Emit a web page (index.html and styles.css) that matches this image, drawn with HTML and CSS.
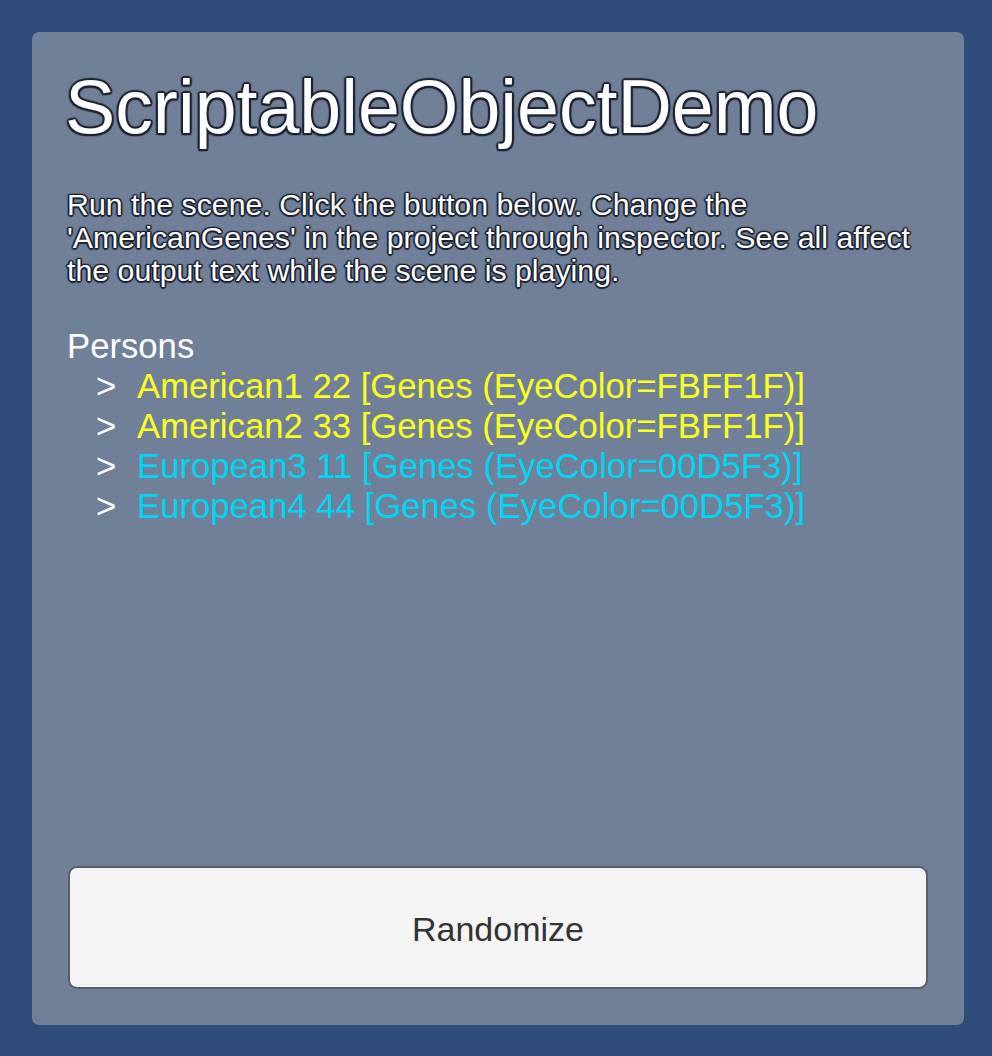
FILE: index.html
```html
<!DOCTYPE html>
<html lang="en">
<head>
<meta charset="utf-8">
<title>ScriptableObjectDemo</title>
<link rel="stylesheet" href="styles.css">
</head>
<body>
<main class="panel">
  <h1 class="title">ScriptableObjectDemo</h1>
  <p class="desc">Run the scene. Click the button below. Change the 'AmericanGenes' in the project through inspector. See all affect the output text while the scene is playing.</p>
  <section class="persons">
    <div class="persons-label">Persons</div>
    <ul class="person-list">
      <li class="person american"><span class="marker">&gt;</span><span>American1 22 [Genes (EyeColor=FBFF1F)]</span></li>
      <li class="person american"><span class="marker">&gt;</span><span>American2 33 [Genes (EyeColor=FBFF1F)]</span></li>
      <li class="person european"><span class="marker">&gt;</span><span>European3 11 [Genes (EyeColor=00D5F3)]</span></li>
      <li class="person european"><span class="marker">&gt;</span><span>European4 44 [Genes (EyeColor=00D5F3)]</span></li>
    </ul>
  </section>
  <button class="btn" type="button">Randomize</button>
</main>
</body>
</html>
```

FILE: styles.css
```css
html, body {
  margin: 0;
  padding: 0;
}
body {
  background: #2f4b7a;
  padding: 32px 28px 31px 32px;
  font-family: "Liberation Sans", Arial, sans-serif;
  box-sizing: border-box;
  height: 1056px;
}
.panel {
  box-sizing: border-box;
  height: 993px;
  background: #708099;
  border-radius: 7px;
  padding: 38px 36px 36px 35px;
  display: flex;
  flex-direction: column;
}
.title {
  margin: 0 0 0 -2px;
  font-weight: normal;
  font-size: 75.3px;
  line-height: 74px;
  color: #ffffff;
  text-shadow:
    2px 0 1px #1e2330,
    -2px 0 1px #1e2330,
    0 2px 1px #1e2330,
    0 -2px 1px #1e2330,
    1.5px 1.5px 1px #1e2330,
    -1.5px -1.5px 1px #1e2330,
    1.5px -1.5px 1px #1e2330,
    -1.5px 1.5px 1px #1e2330,
    0 0 3px #1e2330;
}
.desc {
  margin: 44px 0 0 0;
  font-size: 30.3px;
  line-height: 33px;
  color: #ffffff;
  text-shadow:
    1.5px 0 1px #1e2330,
    -1.5px 0 1px #1e2330,
    0 1.5px 1px #1e2330,
    0 -1.5px 1px #1e2330,
    1px 1px 1px #1e2330,
    -1px -1px 1px #1e2330,
    1px -1px 1px #1e2330,
    -1px 1px 1px #1e2330,
    0 0 2px #1e2330;
}
.persons {
  margin-top: 39px;
  font-size: 34.7px;
  line-height: 40px;
}
.persons-label {
  color: #ffffff;
}
.person-list {
  list-style: none;
  margin: 0;
  padding: 0 0 0 29px;
}
.person {
  display: flex;
}
.marker {
  color: #ffffff;
  width: 41px;
  flex: none;
}
.american {
  color: #fbff1f;
}
.european {
  color: #00d5f3;
}
.btn {
  margin-top: auto;
  margin-left: 1px;
  box-sizing: border-box;
  height: 123px;
  width: 860px;
  background: #f4f4f4;
  border: 2px solid #5a5f66;
  border-radius: 9px;
  font-family: "Liberation Sans", Arial, sans-serif;
  font-size: 34px;
  color: #333333;
  padding: 0;
  padding-top: 4px;
}
```
